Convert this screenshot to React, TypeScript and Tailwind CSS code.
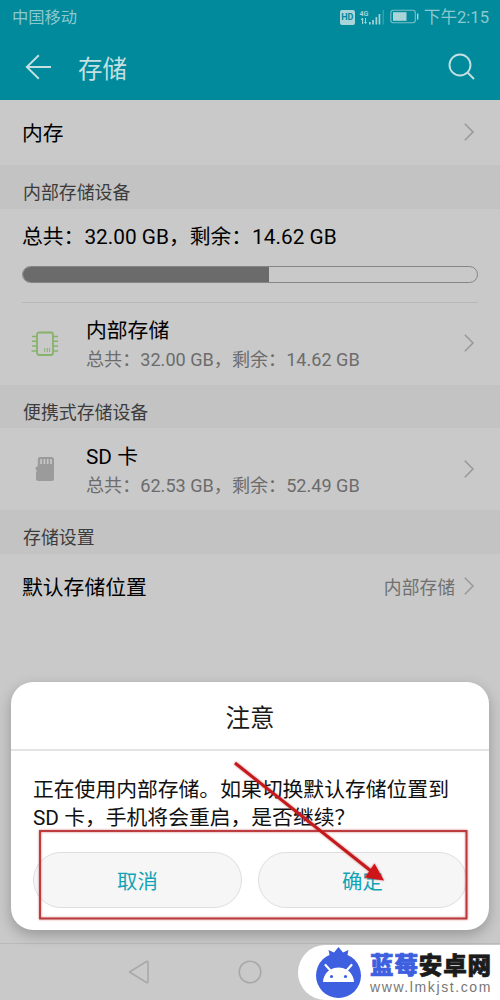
import type { ReactNode } from "react";

function Chevron() {
  return (
    <svg width="12" height="20" viewBox="0 0 12 20" fill="none" className="mb-px shrink-0">
      <path d="M1.8 1.8 L10 10 L1.8 18.2" stroke="#989898" strokeWidth="1.5" />
    </svg>
  );
}

function ChipIcon() {
  return (
    <svg width="28" height="26" viewBox="0 0 28 26" fill="none" stroke="#86b26b">
      <rect x="6" y="1.5" width="16" height="22.5" rx="2" strokeWidth="1.8" />
      <path
        d="M1 5.5H5.5 M1 10.3H5.5 M1 15H5.5 M0.5 20H5.5 M22.5 5.5H27 M22.5 10.3H27 M22.5 15H27 M22.5 20H27"
        strokeWidth="1.5"
      />
      <path d="M13.8 17V21 M16.3 17V21 M18.6 17V21" strokeWidth="1" />
    </svg>
  );
}

function SdIcon() {
  return (
    <svg width="20" height="26" viewBox="0 0 20 26">
      <path
        d="M5 1H16.5Q19 1 19 3.5V22.5Q19 25 16.5 25H3.5Q1 25 1 22.5V16L2.2 14.8L0.6 13.5V11.5L2.8 10V3.2Q2.8 1 5 1Z"
        fill="#9b9b9b"
      />
      <path d="M6.1 3V8 M9.4 3V8 M12.7 3V8 M16 3V8" stroke="#c9c9c9" strokeWidth="1.6" />
    </svg>
  );
}

function StatusBar() {
  return (
    <div className="flex h-[35px] items-center justify-between pr-[11px] pl-3 text-[16.3px] text-[#8bc9cf]">
      <span className="pt-[2px]">中国移动</span>
      <div className="flex items-center">
        <span className="flex h-[15px] w-[15px] items-center justify-center rounded-[2px] bg-[#a9d5d9] text-[9px] font-bold text-[#008a9b]">
          HD
        </span>
        <svg width="26" height="18" viewBox="0 0 26 18" className="mt-[-1px] ml-[4px]" fill="#a2d3d8">
          <text x="0.5" y="7.5" fontSize="8" fontWeight="700" fontFamily="Roboto" textLength="9" lengthAdjust="spacingAndGlyphs">
            4G
          </text>
          <path d="M3 10H4.2V16H3V12H1.8Z M6 10H7V14H8L6.5 16L5 14H6Z" />
          <path d="M10 14H11.7V16.5H10Z M13.2 12H14.9V16.5H13.2Z M16.5 9H18.2V16.5H16.5Z M19.6 6H21.3V16.5H19.6Z" />
          <path d="M23.5 2H25V16.5H23.5Z" opacity="0.3" />
        </svg>
        <svg width="29" height="15" viewBox="0 0 29 15" className="mt-[-1px] ml-[5px]">
          <rect x="0.8" y="1.2" width="24.5" height="12.6" rx="2.5" fill="none" stroke="#7fc0c7" strokeWidth="1.1" />
          <rect x="3" y="3.2" width="13.5" height="8.6" fill="#a9d5d9" />
          <path d="M27 4.5H28.4V10.5H27Z" fill="#a9d5d9" />
        </svg>
        <span className="ml-[5px] pt-[2px] text-[16.6px]">下午2:15</span>
      </div>
    </div>
  );
}

function AppBar() {
  return (
    <div className="flex h-[65px] items-center pr-[25px] pl-[25px]">
      <svg width="27" height="26" viewBox="0 0 27 26" fill="none" stroke="#c4dfe1" strokeWidth="1.9" className="mb-[2px]">
        <path d="M26 13H1.8 M13.8 1.2L1.8 13L13.8 24.8" />
      </svg>
      <h1 className="ml-[26px] flex-1 pt-[5px] text-[24.5px] leading-none text-[#c5e0e2]">存储</h1>
      <svg width="27" height="27" viewBox="0 0 27 27" fill="none" stroke="#c4dfe1" strokeWidth="1.9" className="mb-[2px]">
        <circle cx="12" cy="12" r="10.5" />
        <path d="M19.5 19.5L26 26" />
      </svg>
    </div>
  );
}

function SectionTitle({ children }: { children: ReactNode }) {
  return (
    <div className="flex h-[43.5px] items-center bg-[#c3c3c3] pt-[13px] pl-[23px] text-[17.9px] leading-none text-[#3c3c3c]">
      {children}
    </div>
  );
}

function DeviceRow({ icon, name, detail }: { icon: ReactNode; name: string; detail: string }) {
  return (
    <div className="flex h-[82px] items-center pr-[25px] pl-[23px]">
      <div className="flex w-[43px] justify-center">{icon}</div>
      <div className="ml-[20px] flex-1 pt-[4px]">
        <div className="text-[20.8px] leading-[29px] text-black">{name}</div>
        <div className="text-[18.1px] leading-[28px] text-[#6c6c6c]">{detail}</div>
      </div>
      <Chevron />
    </div>
  );
}

function NoticeDialog() {
  return (
    <div className="absolute top-[682px] left-[11px] flex h-[248px] w-[478px] flex-col rounded-[22px] bg-white shadow-[0_5px_14px_rgba(0,0,0,0.25)]">
      <div className="flex h-[69px] items-center justify-center border-b-2 border-[#e4e4e4] pt-[7px] text-[24.5px] text-[#1a1a1a]">
        注意
      </div>
      <p className="mt-[26px] pl-[22px] text-[20.8px] leading-[27.5px] whitespace-nowrap text-[#111]">
        正在使用内部存储。如果切换默认存储位置到
        <br />
        SD 卡，手机将会重启，是否继续？
      </p>
      <div className="mt-[20px] flex gap-4 px-[22px]">
        <button className="h-14 flex-1 rounded-full border border-[#dedede] bg-[#f6f6f6] pt-[4px] text-[20.4px] text-[#13a3b5]">
          取消
        </button>
        <button className="h-14 flex-1 rounded-full border border-[#dedede] bg-[#f6f6f6] pt-[4px] text-[20.4px] text-[#13a3b5]">
          确定
        </button>
      </div>
    </div>
  );
}

function Annotation() {
  return (
    <svg width="500" height="200" viewBox="0 745 500 200" className="absolute top-[745px] left-0 drop-shadow-[0_0_1px_rgba(190,30,30,0.6)]">
      <rect x="40" y="831" width="426.5" height="87.5" fill="none" stroke="#b9383b" strokeWidth="1.9" />
      <path d="M235 763L371 871" stroke="#c4191d" strokeWidth="3" />
      <path d="M384 880.5L365 877.5L374.5 863.5Z" fill="#cf1519" />
    </svg>
  );
}

function Watermark() {
  return (
    <div className="absolute top-[945px] left-[298px] flex h-[55px] w-[202px] items-start rounded-l-[28px] bg-white pl-[17px]">
      <svg width="47" height="53" viewBox="0 0 47 53" className="mt-[1px]">
        <circle cx="23.5" cy="29.5" r="22.5" fill="#3d5fe0" />
        <path d="M15 11L13.5 4L19 6.5L23.5 1L28 6.5L33.5 4L32 11Z" fill="#3d5fe0" />
        <path d="M8 36Q8 33 9.5 30C15 18.5 32 18.5 37.5 30Q39 33 39 36Z" fill="white" />
        <path d="M15 24L10.5 19 M32 24L36.5 19" stroke="white" strokeWidth="2.2" strokeLinecap="round" />
        <circle cx="16.5" cy="30.5" r="1.6" fill="#3d5fe0" />
        <circle cx="30.5" cy="30.5" r="1.6" fill="#3d5fe0" />
      </svg>
      <div className="ml-[8px] pt-[8px] whitespace-nowrap">
        <div className="text-[23.5px] leading-[26px] font-black tracking-[0.9px] text-[#1b1b1b] [-webkit-text-stroke:0.7px]">
          <span className="text-[#3d5fe0]">蓝莓</span>安卓网
        </div>
        <div className="mt-px font-['Liberation_Sans'] text-[14px] leading-[14px] tracking-[1.6px] text-[#777]">
          www.lmkjst.com
        </div>
      </div>
    </div>
  );
}

export default function App() {
  return (
    <div className="relative flex h-[1000px] w-[500px] flex-col overflow-hidden bg-[#c9c9c9] font-[Roboto,'Noto_Sans_CJK_SC',sans-serif]">
      <header className="h-[100px] shrink-0 bg-[#008a9b]">
        <StatusBar />
        <AppBar />
      </header>

      <main className="flex-1">
        <div className="flex h-[65px] items-center justify-between pr-[25px] pl-[22px] text-[20.8px] text-black">
          <span className="pt-[4px]">内存</span>
          <Chevron />
        </div>

        <SectionTitle>内部存储设备</SectionTitle>
        <div className="mx-[22px] h-[94px] border-b border-[#b8b8b8] pt-[13px]">
          <div className="text-[20.8px] leading-[30px] text-black">总共：32.00 GB，剩余：14.62 GB</div>
          <div className="mt-[14.5px] h-[17px] overflow-hidden rounded-full border-[1.5px] border-[#858585]">
            <div className="h-full w-[54.2%] bg-[#6b6b6b]" />
          </div>
        </div>
        <DeviceRow icon={<ChipIcon />} name="内部存储" detail="总共：32.00 GB，剩余：14.62 GB" />

        <SectionTitle>便携式存储设备</SectionTitle>
        <DeviceRow icon={<SdIcon />} name="SD 卡" detail="总共：62.53 GB，剩余：52.49 GB" />

        <SectionTitle>存储设置</SectionTitle>
        <div className="flex h-[65px] items-center pr-[25px] pl-[22px]">
          <span className="flex-1 pt-[6px] text-[20.8px] text-black">默认存储位置</span>
          <span className="mr-[8px] pt-[5px] text-[17.8px] text-[#707070]">内部存储</span>
          <Chevron />
        </div>
      </main>

      <nav className="flex h-[57px] shrink-0 items-center border-t border-[#bababa] pl-[128px]">
        <svg width="22" height="24" viewBox="0 0 22 24" fill="none" stroke="#a9a9a9" strokeWidth="1.6">
          <path d="M1.5 12L18.5 1.5Q20 1 20 2.5V21.5Q20 23 18.5 22.5Z" strokeLinejoin="round" />
        </svg>
        <svg width="24" height="24" viewBox="0 0 24 24" fill="none" className="ml-[88px]">
          <circle cx="12" cy="12" r="10.8" stroke="#a9a9a9" strokeWidth="1.6" />
        </svg>
      </nav>

      <NoticeDialog />
      <Annotation />
      <Watermark />
    </div>
  );
}
